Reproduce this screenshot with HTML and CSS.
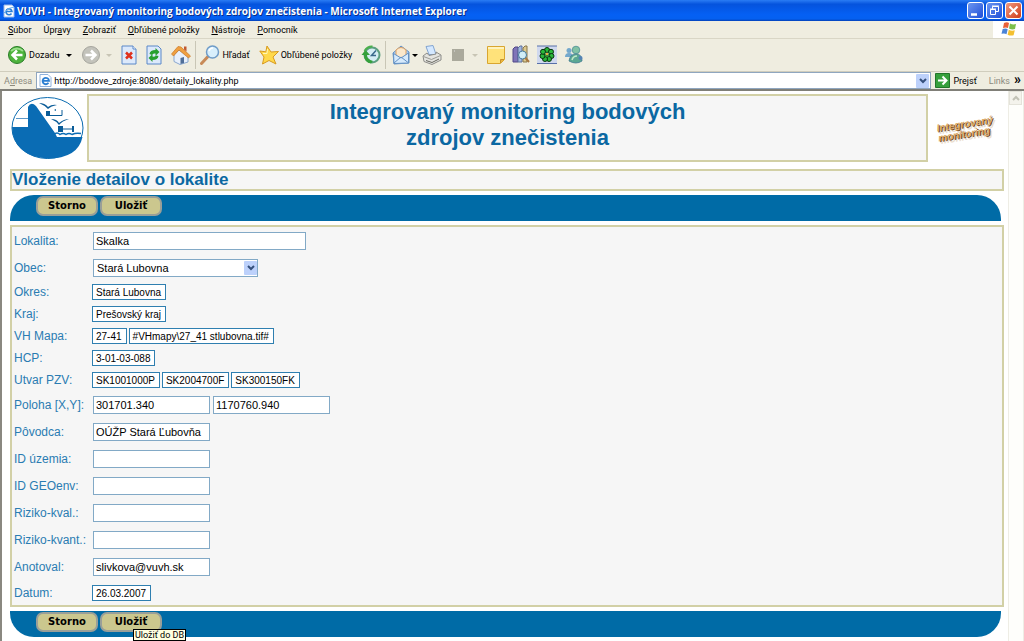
FILE: index.html
```html
<!DOCTYPE html>
<html lang="sk">
<head>
    <meta charset="UTF-8">
    <meta name="viewport" content="width=device-width, initial-scale=1.0">
    <title>VUVH - Integrovaný monitoring bodových zdrojov znečistenia</title>
    <link rel="stylesheet" href="styles.css">
</head>
<body>
    <div class="window">
        <!-- Title bar -->
        <div class="titlebar">
            <svg class="page-icon" width="12" height="14" viewBox="0 0 12 14">
                <path d="M1 1h8l2 2v10H1z" fill="#fff" stroke="#9bb8e8"/>
                <path d="M8.500 9.500A3 3 0 1 1 9 7.500H3.500" fill="none" stroke="#2b7fd8" stroke-width="1.600"/>
                <path d="M1 9Q5 3 11 3" fill="none" stroke="#6ab0f0"/>
            </svg>
            <span class="title-text">VUVH - Integrovaný monitoring bodových zdrojov znečistenia - Microsoft Internet Explorer</span>
            <button class="win-btn" aria-label="Minimalizovať">
                <svg width="15" height="15" viewBox="0 0 15 15"><path d="M3 11.500h6" stroke="#fff" stroke-width="2.500"/></svg>
            </button>
            <button class="win-btn" aria-label="Obnoviť">
                <svg width="15" height="15" viewBox="0 0 15 15" fill="none" stroke="#fff"><path d="M5.500 6V3.500h6v5H9M5 3h7"/><path d="M3.500 6.500h5v5h-5zM3 6h6"/></svg>
            </button>
            <button class="win-btn close" aria-label="Zavrieť">
                <svg width="15" height="15" viewBox="0 0 15 15"><path d="M3.500 3.500l8 8M11.500 3.500l-8 8" stroke="#fff" stroke-width="2"/></svg>
            </button>
        </div>

        <!-- Menu -->
        <div class="menubar">
            <button><u>S</u>úbor</button>
            <button>Úpr<u>a</u>vy</button>
            <button><u>Z</u>obraziť</button>
            <button><u>O</u>bľúbené položky</button>
            <button><u>N</u>ástroje</button>
            <button><u>P</u>omocník</button>
            <div class="throbber">
                <svg width="16" height="15" viewBox="0 0 16 15">
                    <path d="M3 1q3-1.500 5 0L7 6Q5 5 2 6z" fill="#e8603a"/>
                    <path d="M9 1.500q3 1.500 6 .5l-1 5q-3 1-6-.500z" fill="#7bbf4a"/>
                    <path d="M1.700 7q3-1.200 5 .2l-1.200 5q-2-1.400-5-.4z" fill="#4a84d8"/>
                    <path d="M7.800 7.800q3 1.500 6 .4l-1.200 5q-3 1-6-.5z" fill="#f4c030"/>
                </svg>
            </div>
        </div>

        <!-- Toolbar -->
        <div class="toolbar">
            <button class="tool back">
                <svg width="20" height="20" viewBox="0 0 20 20">
                    <circle cx="10" cy="10" r="8.500" fill="#4db33c" stroke="#2a7d28"/>
                    <path d="M4 6q6-5 12 0" fill="none" stroke="#9adf8c" stroke-width="2"/>
                    <path d="M15.500 10H6M10 5.500L5.500 10l4.500 4.500" fill="none" stroke="#fff" stroke-width="2.500"/>
                </svg>
                <span>Dozadu</span>
                <i class="arrow"></i>
            </button>
            <button class="tool forward" aria-label="Dopredu">
                <svg width="20" height="20" viewBox="0 0 20 20">
                    <circle cx="10" cy="10" r="8.500" fill="#c3c3bb" stroke="#a6a69e"/>
                    <path d="M4.500 10H14M10 5.500l4.500 4.500-4.500 4.500" fill="none" stroke="#fff" stroke-width="2.500"/>
                </svg>
                <i class="arrow dim"></i>
            </button>
            <button class="tool" aria-label="Zastaviť">
                <svg width="16" height="20" viewBox="0 0 16 20">
                    <path d="M1 1h11l3 3v15H1z" fill="#dce9fb" stroke="#5a88c8"/>
                    <path d="M12 1v3h3" fill="#fff" stroke="#5a88c8"/>
                    <path d="M5 7.500l6 6M11 7.500l-6 6" stroke="#e0301c" stroke-width="2.500"/>
                </svg>
            </button>
            <button class="tool" aria-label="Obnoviť stránku">
                <svg width="16" height="20" viewBox="0 0 16 20">
                    <path d="M1 1h11l3 3v15H1z" fill="#dce9fb" stroke="#5a88c8"/>
                    <path d="M3.500 9q.5-4 6-4V3l4 4-4 4V8.500Q6.500 8 6 10z" fill="#28a030"/>
                    <path d="M12.500 11q-.5 4-6 4v2l-4-4 4-4v2.500q3 .5 3.500-1z" fill="#28a030"/>
                </svg>
            </button>
            <button class="tool" aria-label="Domov">
                <svg width="20" height="20" viewBox="0 0 20 20">
                    <path d="M3 10l5-5 9 6v6l-8 2.500-6-3z" fill="#e8f0fb" stroke="#88a6cf"/>
                    <path d="M.5 9L7 1.500 10 2l9.500 9-2 2L8 5l-5.500 6z" fill="#f0a040" stroke="#c87828" stroke-width=".7"/>
                    <path d="M9.500 13l3.500-1v6l-3.500 1z" fill="#4f6e98"/>
                    <path d="M13 1.500h2.500v5L13 4.500z" fill="#c05830"/>
                </svg>
            </button>
            <span class="divider"></span>
            <button class="tool search">
                <svg width="20" height="20" viewBox="0 0 20 20">
                    <path d="M7.500 12L1.500 18.500" stroke="#c88a58" stroke-width="3" stroke-linecap="round"/>
                    <circle cx="12.500" cy="7" r="6" fill="#d8effc" stroke="#6f9cc8" stroke-width="1.500"/>
                    <path d="M9 6q1-3 4-3" fill="none" stroke="#fff" stroke-width="1.500"/>
                </svg>
                <span>Hľadať</span>
            </button>
            <button class="tool favorites">
                <svg width="20" height="20" viewBox="0 0 20 20">
                    <path d="M8 1l4 6 7.500-.5-5.500 5.500 3 7-7-3.500L3.500 19 5 12 .8 6l6 .8z" fill="#ffd94a" stroke="#d89a20"/>
                    <path d="M8.500 4L8 8.500 4 8.500" fill="none" stroke="#fff6b8"/>
                </svg>
                <span>Obľúbené položky</span>
            </button>
            <button class="tool history" aria-label="História">
                <svg width="20" height="20" viewBox="0 0 20 20">
                    <circle cx="11" cy="10" r="7.500" fill="#d4ecf4" stroke="#5d9f80" stroke-width="2"/>
                    <path d="M10 18.500A8 8 0 0 1 3 10H.5L4.500 5 9 10H6q0 4 6 6z" fill="#35a03c"/>
                    <path d="M3.500 6q3-5 8-4.500" fill="none" stroke="#4bb04c" stroke-width="2"/>
                    <path d="M15 5.500L10.500 10.500H15" fill="none" stroke="#38688c" stroke-width="1.500"/>
                </svg>
            </button>
            <span class="divider"></span>
            <button class="tool mail" aria-label="Pošta">
                <svg width="18" height="20" viewBox="0 0 18 20">
                    <path d="M1 8l8-7 8 6v11L2 19z" fill="#a9cdf2" stroke="#6391c4"/>
                    <path d="M4 5q5-5 10 0v6l-5 3-5-3z" fill="#fbe8cb" stroke="#e0a060"/>
                    <path d="M1.500 8.500L9 13l7.500-5v10L2 18.500z" fill="#d6eafc" stroke="#6391c4"/>
                    <path d="M2 18l7-6 7 5.500" fill="none" stroke="#6391c4"/>
                </svg>
                <i class="arrow"></i>
            </button>
            <button class="tool" aria-label="Tlačiť">
                <svg width="20" height="20" viewBox="0 0 20 20">
                    <path d="M4 1.500L11 .5l3 9H7z" fill="#d4e8ff" stroke="#82a4d0"/>
                    <path d="M1 11l4-3 2 2.500 7-1.500v-2l5 3v5l-9 4.500-8-3z" fill="#e4e4e0" stroke="#8c8c88"/>
                    <path d="M1.500 11.500l8 3 9-4" fill="none" stroke="#9b9b95"/>
                    <path d="M4 15.500l6 2 7-3.500" fill="none" stroke="#66665f"/>
                </svg>
            </button>
            <button class="tool edit" aria-label="Upraviť">
                <svg width="14" height="14" viewBox="0 0 14 14"><path d="M1 1h12v12H1z" fill="#aaa99c"/><path d="M3 3h1" stroke="#ddd"/></svg>
                <i class="arrow dim"></i>
            </button>
            <button class="tool" aria-label="Diskusia">
                <svg width="18" height="18" viewBox="0 0 18 18">
                    <path d="M.5.5h17v13l-4 4H.5z" fill="#ffe27a" stroke="#d9a630"/>
                    <path d="M1 2h16" stroke="#fff3bd" stroke-width="2"/>
                    <path d="M17 13.500h-3.500V17" fill="#e8b23c" stroke="#c8922a"/>
                </svg>
            </button>
            <button class="tool" aria-label="Zdroje informácií">
                <svg width="18" height="20" viewBox="0 0 18 20">
                    <path d="M1 4l2-2h3v15H1z" fill="#8075b8" stroke="#504888"/>
                    <path d="M6 3l2-2h2v16H6z" fill="#a3b8df" stroke="#5d719e"/>
                    <path d="M11 3l2-2h2v16h-4z" fill="#ddc98e" stroke="#87764a"/>
                    <circle cx="10.500" cy="10" r="4" fill="#d1eef8" stroke="#467a9c"/>
                    <path d="M13.500 13l3.500 4" stroke="#a87740" stroke-width="2"/>
                </svg>
            </button>
            <button class="tool" aria-label="ICQ">
                <svg width="20" height="20" viewBox="0 0 20 20">
                    <path d="M0 1h20v18H0z" fill="#cfd8ee"/>
                    <path d="M0 1h20M0 18.500h20" stroke="#5870a8"/>
                    <g fill="#2ab83a" stroke="#0b3510">
                        <circle cx="10" cy="5" r="2.500"/><circle cx="14" cy="6.800" r="2.500"/>
                        <circle cx="14.500" cy="11" r="2.500"/><circle cx="12" cy="14" r="2.500"/>
                        <circle cx="8" cy="14" r="2.500"/><circle cx="5.500" cy="11" r="2.500"/>
                        <circle cx="6" cy="6.800" r="2.500"/>
                    </g>
                    <circle cx="10" cy="10" r="2" fill="#268d30"/>
                    <circle cx="10" cy="9" r="1.200" fill="#f0b040"/>
                </svg>
            </button>
            <button class="tool" aria-label="Messenger">
                <svg width="20" height="20" viewBox="0 0 20 20">
                    <circle cx="5" cy="5.500" r="2.500" fill="#74a8cc"/>
                    <path d="M1 12q0-4 4-4t4 4z" fill="#74a8cc"/>
                    <circle cx="12" cy="5" r="3.800" fill="#81c2a5" stroke="#4b8d93" stroke-width=".8"/>
                    <path d="M5 16q1-7 7-7t6 7q-6 4-13 0z" fill="#5aa793" stroke="#3d7990" stroke-width=".8"/>
                    <path d="M8 15q1-4 5-4" stroke="#c0e8c8" stroke-width="1.500" fill="none"/>
                    <circle cx="16.500" cy="13" r="2" fill="#5583b5"/>
                </svg>
            </button>
        </div>

        <!-- Address bar -->
        <div class="addressbar">
            <label for="address">A<u>d</u>resa</label>
            <div class="address-box">
                <svg width="13" height="13" viewBox="0 0 13 13">
                    <path d="M1 .5h8l3 3v9H1z" fill="#fff" stroke="#8fb2dc"/>
                    <path d="M9.500 8.800A3.200 3.200 0 1 1 10 6.800H4" fill="none" stroke="#2a7ed2" stroke-width="1.800"/>
                </svg>
                <input type="text" id="address" value="http://bodove_zdroje:8080/detaily_lokality.php">
                <button class="drop" aria-label="Zobraziť adresy">
                    <svg width="8" height="6" viewBox="0 0 8 6"><path d="M1 1l3 3 3-3" fill="none" stroke="#35507c" stroke-width="2"/></svg>
                </button>
            </div>
            <button class="go">
                <svg width="15" height="15" viewBox="0 0 15 15">
                    <path d="M.5.5h14v14H.5z" fill="#36a03c" stroke="#22752a"/>
                    <path d="M3 7.500h8M7.500 3.500l4 4-4 4" fill="none" stroke="#fff" stroke-width="2"/>
                </svg>
                <span>Prejsť</span>
            </button>
            <span class="links">Links</span>
            <span class="more">»</span>
        </div>

        <div class="viewport">
            <div class="content">
                <div class="header">
                    <svg class="logo" width="74" height="64" viewBox="0 0 74 64">
                        <ellipse cx="37.500" cy="32" rx="35.500" ry="30.500" fill="#fff" stroke="#0a6bb0"/>
                        <path d="M2 31H18V11q3-6 8-1l19 27 2 4h25.500Q68 62.500 37.500 62.500 3 60 2 31z" fill="#0a6cb4"/>
                        <path d="M6 22.500h12" stroke="#5c98c8"/>
                        <path d="M44 38.500q3-3 6 0 3-2 6 0 3-2 6 0 4-2 9-1" fill="none" stroke="#0a6cb4" stroke-width="1.500"/>
                        <path d="M29 7q6 0 9 4 4-3 9-2-6 1-9 4-4-4-9-6z" fill="#0a5c98"/>
                        <path d="M36 19.500h16V14" fill="none" stroke="#0a5c98"/>
                        <path d="M36 15h4v5h-4zM44 14l2-1v2z" fill="#0a5c98"/>
                        <path d="M41 23q6 0 8 4 5-4 10-4-7 2-10 6-3-4-8-6z" fill="#0a5c98"/>
                        <path d="M48 30h5v6h-5zM62 30h2v6h-2z" fill="#0a5c98"/>
                        <path d="M52 33h10" stroke="#0a5c98"/>
                    </svg>
                    <div class="banner">
                        <h1>Integrovaný monitoring bodových<br>zdrojov znečistenia</h1>
                    </div>
                    <svg class="im-logo" width="60" height="36" viewBox="0 0 60 36">
                        <g transform="rotate(-9 30 18)">
                            <g fill="#eadccb"><text x="3" y="20">Integrovaný</text><text x="3" y="30">monitoring</text></g>
                            <g fill="#6e4521"><text x="2" y="18">Integrovaný</text><text x="2" y="28">monitoring</text></g>
                            <g fill="#dba968"><text x="1" y="17">Integrovaný</text><text x="1" y="27">monitoring</text></g>
                        </g>
                    </svg>
                </div>

                <h2>Vloženie detailov o lokalite</h2>

                <div class="bar bar-top">
                    <button class="action">Storno</button>
                    <button class="action">Uložiť</button>
                </div>

                <form class="details">
                    <div class="row">
                        <label for="lokalita">Lokalita:</label>
                        <input type="text" id="lokalita" class="wide" value="Skalka">
                    </div>
                    <div class="row">
                        <label for="obec">Obec:</label>
                        <div class="select">
                            <select id="obec"><option>Stará Lubovna</option></select>
                            <span class="drop">
                                <svg width="8" height="6" viewBox="0 0 8 6"><path d="M1 1l3 3 3-3" fill="none" stroke="#35507c" stroke-width="2"/></svg>
                            </span>
                        </div>
                    </div>
                    <div class="row short">
                        <label for="okres">Okres:</label>
                        <output id="okres">Stará Lubovna</output>
                    </div>
                    <div class="row short">
                        <label for="kraj">Kraj:</label>
                        <output id="kraj">Prešovský kraj</output>
                    </div>
                    <div class="row short">
                        <label for="mapa">VH Mapa:</label>
                        <output id="mapa">27-41</output>
                        <output>#VHmapy\27_41 stlubovna.tif#</output>
                    </div>
                    <div class="row short">
                        <label for="hcp">HCP:</label>
                        <output id="hcp">3-01-03-088</output>
                    </div>
                    <div class="row short">
                        <label for="pzv">Utvar PZV:</label>
                        <output id="pzv">SK1001000P</output>
                        <output>SK2004700F</output>
                        <output>SK300150FK</output>
                    </div>
                    <div class="row">
                        <label for="poloha-x">Poloha [X,Y]:</label>
                        <input type="text" id="poloha-x" value="301701.340">
                        <input type="text" id="poloha-y" aria-label="Poloha Y" value="1170760.940">
                    </div>
                    <div class="row">
                        <label for="povodca">Pôvodca:</label>
                        <input type="text" id="povodca" value="OÚŽP Stará Ľubovňa">
                    </div>
                    <div class="row">
                        <label for="uzemie">ID územia:</label>
                        <input type="text" id="uzemie">
                    </div>
                    <div class="row">
                        <label for="geoenv">ID GEOenv:</label>
                        <input type="text" id="geoenv">
                    </div>
                    <div class="row">
                        <label for="kval">Riziko-kval.:</label>
                        <input type="text" id="kval">
                    </div>
                    <div class="row">
                        <label for="kvant">Riziko-kvant.:</label>
                        <input type="text" id="kvant">
                    </div>
                    <div class="row">
                        <label for="anotoval">Anotoval:</label>
                        <input type="text" id="anotoval" value="slivkova@vuvh.sk">
                    </div>
                    <div class="row short">
                        <label for="datum">Datum:</label>
                        <output id="datum">26.03.2007</output>
                    </div>
                </form>

                <div class="bar bar-bottom">
                    <button class="action">Storno</button>
                    <div class="action-wrap">
                        <button class="action">Uložiť</button>
                        <span class="tooltip">Uložiť do DB</span>
                    </div>
                </div>
            </div>
            <div class="scrollbar">
                <button aria-label="Posunúť nahor">
                    <svg width="8" height="6" viewBox="0 0 8 6"><path d="M1 5l3-3 3 3" fill="none" stroke="#c2c2b6" stroke-width="2"/></svg>
                </button>
            </div>
        </div>
    </div>
</body>
</html>
```

FILE: styles.css
```css
* {
    margin: 0;
    padding: 0;
    box-sizing: border-box;
}

body {
    background-color: #fff;
    font-family: "Liberation Sans", Arial, sans-serif;
    font-size: 11px;
    color: #000;
}

button {
    border: none;
    background: none;
    font: inherit;
    color: inherit;
}

svg {
    display: block;
    flex: none;
}

.window {
    display: flex;
    flex-direction: column;
    height: 100vh;
    overflow: hidden;
}

/* browser chrome */
.titlebar,
.menubar,
.toolbar,
.addressbar {
    display: flex;
    align-items: center;
    flex: none;
    white-space: nowrap;
    font-family: Roboto, Tahoma, sans-serif;
    font-size: 9px;
    background-color: #efede0;
}

.titlebar {
    height: 21px;
    padding: 0 2px 0 3px;
    gap: 2px;
    background: linear-gradient(#2a7cf4, #0553dd 20%, #0560f4 70%, #0560f0 90%, #0340b8);
    color: #fff;
    font-family: "Open Sans", "Trebuchet MS", sans-serif;
    font-size: 10px;
    font-weight: 700;
    text-shadow: 1px 1px #0a2c86;
}

.title-text {
    flex: 1;
}

.win-btn {
    border: 1px solid #fff;
    border-radius: 3px;
    background: linear-gradient(135deg, #6c96f0, #1f4fd8);
}

.win-btn.close {
    background: linear-gradient(135deg, #f09a80, #cf3c18);
}

.menubar {
    height: 18px;
    padding-left: 8px;
    gap: 12px;
    border-bottom: 1px solid #d9d6c6;
}

.throbber {
    display: flex;
    align-items: center;
    justify-content: center;
    width: 31px;
    height: 17px;
    margin-left: auto;
    background-color: #fff;
}

.toolbar {
    height: 33px;
    padding-left: 7px;
    gap: 9px;
    border-bottom: 1px solid #d0cdbd;
}

.tool {
    display: flex;
    align-items: center;
    gap: 2px;
}

.arrow {
    border: 3px solid transparent;
    border-top-color: #000;
    border-bottom: none;
}

.arrow.dim {
    border-top-color: #c8c5b5;
}

.back .arrow,
.edit .arrow {
    margin-left: 5px;
}

.forward .arrow {
    margin-left: 3px;
}

.edit ~ .tool {
    margin-right: -2px;
}

.divider {
    width: 1px;
    height: 28px;
    margin: 0 -5px;
    background-color: #c9c6b6;
}

.mail {
    margin: 0 -5px 0 2px;
}

.addressbar {
    height: 19px;
    padding: 0 3px 0 4px;
    gap: 4px;
    border-bottom: 2px solid #807f78;
}

.addressbar label,
.links {
    color: #8c8a7e;
}

.address-box {
    display: flex;
    align-items: center;
    flex: 1;
    height: 17px;
    padding: 0 1px 0 2px;
    border: 1px solid #8fa6bf;
    background-color: #fff;
}

.address-box input {
    flex: 1;
    border: none;
    padding-left: 2px;
    font: inherit;
}

.drop {
    display: flex;
    align-items: center;
    justify-content: center;
    width: 13px;
    height: 14px;
    border-radius: 1px;
    background-color: #bdd1fb;
}

.go {
    display: flex;
    align-items: center;
    gap: 3px;
}

.links {
    margin-left: 8px;
}

.more {
    height: 18px;
    font-size: 14px;
    font-weight: 700;
    line-height: 14px;
}

/* page */
.viewport {
    display: flex;
    flex: 1;
    min-height: 0;
    border-left: 2px solid #8a8880;
}

.content {
    flex: 1;
    padding: 3px 4px 0 8px;
}

.header {
    display: flex;
    align-items: center;
    gap: 3px;
    margin-bottom: 7px;
}

.banner {
    flex: 1;
    height: 68px;
    padding-top: 3px;
    border: 2px solid #d2d0a6;
    background-color: #f6f6f6;
    text-align: center;
}

h1 {
    font-size: 22px;
    line-height: 26px;
    color: #0b68a2;
}

.im-logo {
    margin: 0 8px 0 5px;
    font: italic bold 10px "Liberation Sans", Arial, sans-serif;
}

h2 {
    height: 22px;
    border: 2px solid #d2d0a6;
    background-color: #f6f6f6;
    font-size: 17px;
    line-height: 18px;
    color: #0b68a2;
}

.bar {
    display: flex;
    align-items: flex-start;
    gap: 2px;
    height: 26px;
    padding: 1px 26px 0;
    background-color: #006ba6;
}

.bar-top {
    margin: 4px 3px 4px 0;
    border-radius: 24px 24px 0 0;
}

.bar-bottom {
    margin: 4px 3px 0 0;
    border-radius: 0 0 24px 24px;
}

.action {
    display: block;
    width: 62px;
    height: 20px;
    border: 2px solid #9a9f98;
    border-radius: 7px;
    background-color: #cbc78e;
    font-family: "DejaVu Sans", Verdana, sans-serif;
    font-size: 10px;
    font-weight: 700;
    line-height: 16px;
}

.action-wrap {
    position: relative;
}

.tooltip {
    position: absolute;
    top: 17px;
    left: 33px;
    padding: 0 1px;
    border: 1px solid #000;
    background-color: #ffffe1;
    font-family: Roboto, Tahoma, sans-serif;
    font-size: 9px;
    line-height: 10px;
    white-space: nowrap;
}

.details {
    padding: 0 2px;
    border: 2px solid #d2d0a6;
    background-color: #f6f6f6;
}

.row {
    display: flex;
    align-items: center;
    gap: 3px;
    height: 27px;
}

.row.short {
    height: 22px;
    gap: 2px;
}

.row.short:last-child {
    height: 25px;
}

.row label {
    width: 76px;
    font-size: 12px;
    color: #2a7cb2;
    white-space: nowrap;
}

.row input {
    width: 117px;
    height: 18px;
    padding: 0 2px;
    border: 1px solid #82a9c6;
    background-color: #fff;
    font: inherit;
}

.row input.wide {
    width: 213px;
}

.row output {
    height: 16px;
    padding: 0 4px 0 3px;
    border: 1px solid #2f7fb0;
    background-color: #fff;
    font-size: 10px;
    line-height: 15px;
}

.select {
    position: relative;
}

.select select {
    display: block;
    width: 165px;
    height: 18px;
    padding: 0 3px;
    border: 1px solid #82a9c6;
    border-radius: 0;
    background-color: #fff;
    font: inherit;
    appearance: none;
}

.select .drop {
    position: absolute;
    top: 2px;
    right: 1px;
    pointer-events: none;
}

.scrollbar {
    width: 16px;
    border-left: 1px solid #eeede5;
    border-right: 1px solid #eeede5;
    background-color: #fefefb;
}

.scrollbar button {
    display: flex;
    align-items: center;
    justify-content: center;
    width: 13px;
    height: 14px;
    border: 1px solid #e4e3da;
    background-color: #f4f3ec;
}
```
